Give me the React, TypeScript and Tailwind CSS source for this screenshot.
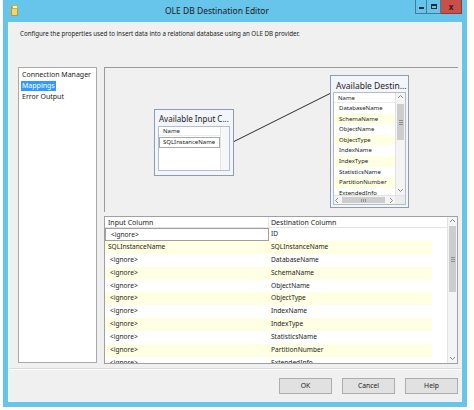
import React from "react";

const gridRows: [string, string][] = [
  ["<ignore>", "ID"],
  ["SQLInstanceName", "SQLInstanceName"],
  ["<ignore>", "DatabaseName"],
  ["<ignore>", "SchemaName"],
  ["<ignore>", "ObjectName"],
  ["<ignore>", "ObjectType"],
  ["<ignore>", "IndexName"],
  ["<ignore>", "IndexType"],
  ["<ignore>", "StatisticsName"],
  ["<ignore>", "PartitionNumber"],
  ["<ignore>", "ExtendedInfo"],
];

const destColumns = [
  "DatabaseName",
  "SchemaName",
  "ObjectName",
  "ObjectType",
  "IndexName",
  "IndexType",
  "StatisticsName",
  "PartitionNumber",
  "ExtendedInfo",
];

function Arrow({ dir }: { dir: "up" | "down" | "left" | "right" }) {
  const d = {
    up: "M1 4 L3.5 1.5 L6 4",
    down: "M1 2 L3.5 4.5 L6 2",
    left: "M4 1 L1.5 3.5 L4 6",
    right: "M2 1 L4.5 3.5 L2 6",
  }[dir];
  return (
    <svg width="7" height="7" viewBox="0 0 7 7" className="block">
      <path d={d} fill="none" stroke="#8a8a8a" strokeWidth="1" />
    </svg>
  );
}

function VScroll({ thumbTop, thumbHeight }: { thumbTop: number; thumbHeight: number }) {
  return (
    <div className="w-[10px] h-full flex flex-col bg-[#f4f4f4] border-l border-[#e3e3e3]">
      <div className="h-[9px] flex items-center justify-center">
        <Arrow dir="up" />
      </div>
      <div className="flex-1 relative">
        <div
          className="absolute left-[1px] right-[1px] bg-[#cdcdcd] flex items-center justify-center"
          style={{ top: thumbTop, height: thumbHeight }}
        >
          <div className="w-[4px] flex flex-col gap-[1px]">
            <div className="h-px bg-[#8f8f8f]" />
            <div className="h-px bg-[#8f8f8f]" />
            <div className="h-px bg-[#8f8f8f]" />
          </div>
        </div>
      </div>
      <div className="h-[9px] flex items-center justify-center">
        <Arrow dir="down" />
      </div>
    </div>
  );
}

function WindowIcon() {
  return (
    <svg width="8" height="11" viewBox="0 0 8 11" className="block">
      <rect x="0.5" y="1.5" width="6" height="9" fill="#f3d66a" stroke="#b99a2c" />
      <rect x="1.5" y="0.5" width="5" height="3" fill="#fbf3c8" stroke="#c8ad4a" />
    </svg>
  );
}

export default function App() {
  return (
    <div className="w-[474px] h-[410px] bg-white overflow-hidden font-['Noto_Sans',sans-serif] text-[#1b1b1b]">
      <div className="ml-[3px] w-[464px] h-[407px] bg-[#67c4ea] flex flex-col px-[5px] pb-[5px]">
        {/* title bar */}
        <div className="h-[22px] flex items-start relative">
          <div className="pt-[5px] pl-[3px]">
            <WindowIcon />
          </div>
          <div className="flex-1 text-center text-[8.5px] leading-[22px] text-[#1a1a1a]">
            OLE DB Destination Editor
          </div>
          <div className="flex h-[15px] -mt-[1px]">
            <div className="w-[12px] h-full border border-[#3f7e98] flex items-end justify-center pb-[4px]">
              <div className="w-[5px] h-[2px] bg-[#1c2a33]" />
            </div>
            <div className="w-[14px] h-full border-y border-r border-[#3f7e98] flex items-center justify-center">
              <div className="w-[6px] h-[5px] border-[1.5px] border-t-[2.5px] border-[#1c2a33]" />
            </div>
            <div className="w-[21px] h-full bg-[#c9504a] border-y border-r border-[#8d3a35] flex items-center justify-center text-[8px] font-bold text-[#4a1512] leading-none">
              x
            </div>
          </div>
        </div>

        {/* client area */}
        <div className="flex-1 bg-[#f0f0f0] flex flex-col border border-[#e9f6fb]">
          <div className="pl-[11px] pt-[6px] h-[44px] text-[6.2px] leading-[9px]">
            Configure the properties used to insert data into a relational database using an OLE DB provider.
          </div>

          <div className="flex pl-[9px] gap-[7px] h-[297px]">
            {/* left nav */}
            <div className="w-[79px] h-[296px] bg-white border border-[#a9a9a9] pt-[1px] pl-[2px] text-[7px]">
              <div className="h-[11px] leading-[11px] pl-[1px]">Connection Manager</div>
              <div className="h-[11px] leading-[11px]">
                <span className="inline-block bg-[#3399ff] text-white px-[1px] leading-[10px]">Mappings</span>
              </div>
              <div className="h-[11px] leading-[11px] pl-[1px]">Error Output</div>
            </div>

            {/* right side */}
            <div className="w-[354px] flex flex-col gap-[4px]">
              {/* diagram */}
              <div className="h-[145px] border-l border-t border-[#9a9a9a] relative">
                <svg className="absolute left-0 top-0" width="353" height="144">
                  <line x1="128" y1="74" x2="226" y2="25" stroke="#2b2b2b" strokeWidth="1" />
                </svg>

                {/* input columns box */}
                <div className="absolute left-[49px] top-[41px] w-[80px] h-[67px] border border-[#8e9bb0] bg-[#f2f5fa] flex flex-col px-[3px] pb-[4px]">
                  <div className="h-[16px] leading-[17px] text-[8px] pl-[1px] whitespace-nowrap">Available Input C...</div>
                  <div className="flex-1 border border-[#b5bcc8] bg-white flex">
                    <div className="flex-1 border-r border-[#e3e3e3]">
                      <div className="h-[9px] leading-[9px] text-[6px] pl-[4px] border-b border-[#ececec]">Name</div>
                      <div className="mt-[1px] h-[11px] border border-[#a9a9a9] text-[6px] leading-[9px] pl-[3px] whitespace-nowrap">
                        SQLInstanceName
                      </div>
                    </div>
                    <div className="w-[8px] bg-[#f6f7f9]" />
                  </div>
                </div>

                {/* destination columns box */}
                <div className="absolute left-[225px] top-[7px] w-[79px] h-[133px] border border-[#8e9bb0] bg-[#f2f5fa] flex flex-col px-[2px] pb-[2px]">
                  <div className="h-[16px] leading-[19px] text-[8.5px] pl-[3px] whitespace-nowrap">Available Destin...</div>
                  <div className="flex-1 border border-[#b5bcc8] bg-white flex flex-col overflow-hidden">
                    <div className="flex-1 flex overflow-hidden">
                      <div className="flex-1 overflow-hidden">
                        <div className="h-[10px] leading-[10px] text-[6px] pl-[4px] border-b border-[#ececec]">Name</div>
                        {destColumns.map((c, i) => (
                          <div
                            key={c}
                            className={`h-[10.6px] leading-[10.6px] text-[6px] pl-[5px] whitespace-nowrap ${
                              i % 2 === 1 ? "bg-[#ffffe4]" : "bg-white"
                            }`}
                          >
                            {c}
                          </div>
                        ))}
                      </div>
                      <VScroll thumbTop={2} thumbHeight={36} />
                    </div>
                    <div className="h-[9px] flex bg-[#f4f4f4] border-t border-[#e3e3e3]">
                      <div className="w-[8px] flex items-center justify-center">
                        <Arrow dir="left" />
                      </div>
                      <div className="w-[44px] my-[1px] bg-[#cdcdcd] flex items-center justify-center gap-[1px]">
                        <div className="w-px h-[3px] bg-[#8f8f8f]" />
                        <div className="w-px h-[3px] bg-[#8f8f8f]" />
                        <div className="w-px h-[3px] bg-[#8f8f8f]" />
                      </div>
                      <div className="flex-1 flex items-center justify-start pl-[3px]">
                        <Arrow dir="right" />
                      </div>
                      <div className="w-[10px] bg-[#ececec]" />
                    </div>
                  </div>
                </div>
              </div>

              {/* mapping grid */}
              <div className="h-[148px] border border-[#a0a0a0] bg-white flex">
                <div className="flex-1 overflow-hidden">
                  <div className="h-[11px] flex text-[7px] leading-[11px] border-b border-[#e4e4e4]">
                    <div className="w-[164px] pl-[3px] border-r border-[#e4e4e4]">Input Column</div>
                    <div className="w-[163px] pl-[2px]">Destination Column</div>
                  </div>
                  {gridRows.map(([input, dest], i) => (
                    <div
                      key={dest}
                      className={`h-[12.9px] flex text-[6.6px] leading-[12.9px] ${
                        i % 2 === 1 ? "bg-[#ffffe4]" : "bg-white"
                      }`}
                      style={{ width: 327 }}
                    >
                      {i === 0 ? (
                        <div className="w-[164px] pl-[5px] border border-[#9f9f9f] bg-white leading-[11px]">{input}</div>
                      ) : (
                        <div className={`w-[164px] ${input === "<ignore>" ? "pl-[5px]" : "pl-[3px]"}`}>{input}</div>
                      )}
                      <div className="w-[163px] pl-[2px] whitespace-nowrap">{dest}</div>
                    </div>
                  ))}
                </div>
                <VScroll thumbTop={0} thumbHeight={66} />
              </div>
            </div>
          </div>

          {/* separator + buttons */}
          <div className="mt-[4px] border-t border-[#dadada] border-b-0">
            <div className="border-t border-white flex justify-end gap-[10px] pr-[3px] pt-[8px]">
              {["OK", "Cancel", "Help"].map((b) => (
                <div
                  key={b}
                  className="w-[53px] h-[16px] bg-[#e1e1e1] border border-[#adadad] text-[6.8px] leading-[14px] text-center"
                >
                  {b}
                </div>
              ))}
            </div>
          </div>
        </div>
      </div>
    </div>
  );
}
